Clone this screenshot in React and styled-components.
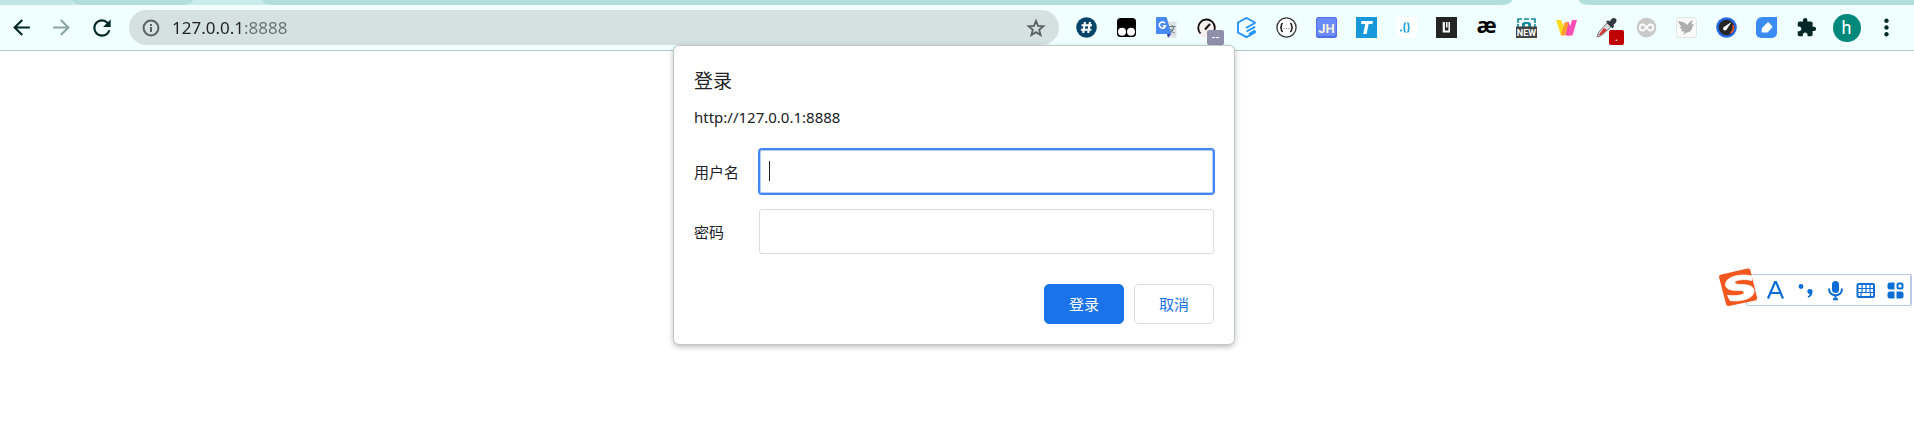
import React from "react";
import styled, { createGlobalStyle } from "styled-components";
import {
  MdArrowBack,
  MdArrowForward,
  MdExtension,
  MdMoreVert,
  MdRefresh
} from "react-icons/md";

const GlobalStyle = createGlobalStyle`
  * {
    box-sizing: border-box;
  }
  body {
    margin: 0;
    background: #ffffff;
    color: #202124;
    font-family: "Noto Sans", "Noto Sans CJK SC", sans-serif;
  }
  button,
  input {
    font-family: inherit;
  }
`;

const Browser = styled.div`
  position: relative;
  min-height: 100vh;
`;

const TabStrip = styled.div`
  display: flex;
  height: 5px;
  background: #f0ffff;
`;

const TabGroup = styled.div`
  display: flex;
  flex: 1;
  overflow: hidden;
  background: #caecea;
  border-bottom-right-radius: 10px 5px;
`;

const Tab = styled.div`
  ${props => (props.$width ? `width: ${props.$width}px` : `flex: 1`)};
  margin-right: ${props => (props.$spaced ? "69px" : "0")};
  background: ${props => (props.$hovered ? "#c0e6e3" : "#b2dfdb")};
  border-radius: ${props => (props.$hovered ? "0" : "0 0 10px 10px / 0 0 5px 5px")};
`;

const RestOfTabs = styled.div`
  width: 335px;
  margin-left: 67px;
  background: #b2dfdb;
  border-bottom-left-radius: 10px 5px;
`;

const Toolbar = styled.header`
  display: flex;
  align-items: center;
  height: 46px;
  padding: 0 17px 1px 11px;
  background: #f0ffff;
  box-shadow: inset 0 -1px 0 #b0cbc9;
`;

const IconRow = styled.div`
  display: flex;
  align-items: center;
  gap: 19px;
`;

const IconButton = styled.button`
  position: relative;
  display: flex;
  flex: none;
  align-items: center;
  justify-content: center;
  width: 21px;
  height: 21px;
  padding: 0;
  border: 0;
  background: none;
  color: ${props => (props.disabled ? "#8ba3a2" : "#012827")};

  svg {
    flex: none;
  }
`;

const Badge = styled.span`
  position: absolute;
  top: 13px;
  left: ${props => (props.$wide ? "11px" : "13px")};
  width: ${props => (props.$wide ? "17px" : "15px")};
  height: 15px;
  border-radius: 2px;
  background: ${props => (props.$wide ? "#8f8faa" : "#c00000")};
  color: #ffffff;
  font: 12px/15px "Liberation Sans", sans-serif;
  text-align: center;
`;

const Avatar = styled.span`
  flex: none;
  width: 28px;
  height: 28px;
  border-radius: 50%;
  background: #00897b;
  color: #ffffff;
  font: 18px/28px Roboto, sans-serif;
  text-align: center;
`;

const AddressBar = styled.div`
  display: flex;
  flex: 1;
  align-items: center;
  height: 35px;
  margin: 0 17px;
  padding: 0 12px;
  border-radius: 18px;
  background: #d5e1e1;
  color: #5a6162;
`;

const AddressInput = styled.input`
  flex: 1;
  min-width: 0;
  margin: 0 12px 0 11px;
  padding: 0;
  border: 0;
  outline: 0;
  background: linear-gradient(to right, #202124 73px, #687071 73px);
  -webkit-background-clip: text;
  background-clip: text;
  -webkit-text-fill-color: transparent;
  font-size: 17px;
  line-height: 24px;
`;

const DialogLayer = styled.div`
  position: absolute;
  top: 46px;
  left: 0;
  right: 6px;
  display: flex;
  justify-content: center;
`;

const Dialog = styled.form`
  width: 560px;
  padding: 20px;
  border-radius: 5px;
  background: #ffffff;
  box-shadow: 0 0 0 1px #c3c8c8, 0 2px 6px rgba(0, 0, 0, 0.35);
`;

const Title = styled.h1`
  margin: 0 0 11px;
  font-size: 19px;
  font-weight: 400;
  line-height: 30px;
`;

const Origin = styled.p`
  margin: 0 0 22px;
  font-size: 15px;
  line-height: 20px;
`;

const Fields = styled.div`
  display: grid;
  gap: 15px;
`;

const Field = styled.div`
  position: relative;
  display: grid;
  grid-template-columns: 65px 1fr;
  align-items: center;
`;

const Label = styled.label`
  font-size: 15px;
  line-height: 20px;
`;

const TextInput = styled.input`
  width: 100%;
  height: 45px;
  padding: 0 10px;
  border: 1px solid ${props => (props.$active ? "#4285f4" : "#dadce0")};
  border-radius: 3px;
  outline: 0;
  background: #ffffff;
  color: #202124;
  font-size: 15px;
  ${props =>
    props.$active &&
    `
    box-shadow: 0 0 0 1px #4285f4, inset 0 0 0 1px #b3cefb;
  `};
`;

const Caret = styled.span`
  position: absolute;
  top: 12px;
  left: 75px;
  width: 1px;
  height: 20px;
  background: #202124;
`;

const Actions = styled.div`
  display: flex;
  justify-content: flex-end;
  gap: 10px;
  margin-top: 30px;
`;

const Button = styled.button`
  width: 80px;
  height: 40px;
  padding: 0;
  border: 1px solid ${props => (props.$primary ? "#1a73e8" : "#dadce0")};
  border-radius: 5px;
  background: ${props => (props.$primary ? "#1a73e8" : "#ffffff")};
  color: ${props => (props.$primary ? "#ffffff" : "#1a73e8")};
  font-size: 15px;
  line-height: 20px;
`;

const ImeBar = styled.aside`
  position: absolute;
  top: 268px;
  right: 2px;
  display: flex;
  align-items: center;
`;

const ImeTools = styled.div`
  display: flex;
  align-items: center;
  gap: 9px;
  height: 32px;
  margin: 5px 0 0 -12px;
  padding: 0 4px 0 18px;
  border: 1px solid #b9cae2;
  border-right-width: 2px;
  border-radius: 2px;
  background: #ffffff;

  button {
    color: #0a6ed6;
  }
`;

const ImeLogo = styled.svg`
  position: relative;
  z-index: 1;
  flex: none;
`;

const Glyph = ({ children, size = 21 }) => (
  <svg width={size} height={size} viewBox="0 0 21 21" fill="none">
    {children}
  </svg>
);

const InfoIcon = () => (
  <svg width="20" height="20" viewBox="0 0 20 20" fill="none">
    <circle cx="10" cy="10" r="7.400" stroke="currentColor" strokeWidth="2" />
    <path d="M10 9v5M10 6v2" stroke="currentColor" strokeWidth="2" />
  </svg>
);

const StarIcon = () => (
  <svg width="22" height="22" viewBox="0 0 24 24" fill="none">
    <path
      d="M12 4.200l2.200 5.500 5.800.4-4.500 3.800 1.500 5.700-5-3.100-5 3.100 1.500-5.700L4 10.100l5.800-.4z"
      stroke="currentColor"
      strokeWidth="2"
    />
  </svg>
);

const extensions = [
  {
    name: "Hash",
    icon: (
      <Glyph>
        <circle cx="10.5" cy="10.5" r="10.3" fill="#05446b" />
        <path
          d="M9 5L7.2 16M14 5l-1.800 11M5.500 8.300h10.500M4.900 12.700h10.500"
          stroke="#fff"
          strokeWidth="2.100"
        />
      </Glyph>
    )
  },
  {
    name: "Tampermonkey",
    icon: (
      <Glyph>
        <rect x="1" y="1" width="19" height="19" rx="3.500" fill="#000" />
        <circle cx="6" cy="14.800" r="4" fill="#fff" />
        <circle cx="15" cy="14.800" r="4" fill="#fff" />
      </Glyph>
    )
  },
  {
    name: "Translate",
    icon: (
      <Glyph>
        <path d="M8 4.500h11.500a1 1 0 0 1 1 1v14a1 1 0 0 1-1 1H12z" fill="#dfe1e3" />
        <path d="M11 17h4l-3 4z" fill="#3440b8" />
        <path
          d="M13 9.500h6.500M16.200 8v1.500M18 10c-.7 2.800-2 4.500-4 6M14.500 12c1 1.800 2.300 3 4 4"
          stroke="#667f88"
          strokeWidth="1.200"
        />
        <path d="M1 0h9.500l5 17H1a1 1 0 0 1-1-1V1a1 1 0 0 1 1-1z" fill="#4a89f3" />
        <path
          d="M9 6.300A3.100 3.100 0 1 0 9.500 8.800H6.700"
          stroke="#fff"
          strokeWidth="1.600"
        />
      </Glyph>
    )
  },
  {
    name: "Speed",
    badge: "--",
    wide: true,
    icon: (
      <Glyph>
        <circle cx="10.500" cy="11" r="10" fill="#f7eeee" />
        <path d="M4.500 16.500A8.300 8.300 0 1 1 17 16" stroke="#111" strokeWidth="1.800" />
        <path d="M9 12.500L14 7" stroke="#111" strokeWidth="2" />
      </Glyph>
    )
  },
  {
    name: "Hexagon",
    icon: (
      <Glyph>
        <path
          d="M18.800 6.500V5.500L10.500 1 2 5.500v10l8.500 4.700 8.300-4.700v-2"
          stroke="#2492ff"
          strokeWidth="1.900"
        />
        <path
          d="M19 6L10 11M19 9.800L10.500 14.500M19 13.500L13 17"
          stroke="#2492ff"
          strokeWidth="1.900"
        />
      </Glyph>
    )
  },
  {
    name: "JSON",
    icon: (
      <Glyph>
        <circle cx="10.500" cy="10.500" r="9.600" fill="#fff" stroke="#333" strokeWidth="1.300" />
        <path
          d="M7 6.500c-1.600 0-1.600.5-1.600 2s0 2-1.400 2c1.400 0 1.400.5 1.400 2s0 2 1.600 2M14 6.500c1.600 0 1.600.5 1.600 2s0 2 1.400 2c-1.400 0-1.400.5-1.400 2s0 2-1.600 2"
          stroke="#222"
          strokeWidth="1.600"
        />
        <path d="M7.500 11.500h1M10 11.500h1M12.500 11.500h1" stroke="#777" />
      </Glyph>
    )
  },
  {
    name: "JSON Handle",
    icon: (
      <Glyph>
        <rect width="21" height="21" rx="2.500" fill="#5070ea" />
        <rect x="1" y="1" width="19" height="18" rx="2" fill="#6b8afa" />
        <text
          x="10.500"
          y="15.500"
          textAnchor="middle"
          fontFamily="Roboto"
          fontSize="13"
          fontWeight="700"
          fill="#f7f3dc"
        >
          JH
        </text>
      </Glyph>
    )
  },
  {
    name: "Typer",
    icon: (
      <Glyph>
        <rect width="21" height="21" fill="#1698db" />
        <path d="M5.500 4h11.500l-.6 3h-3.800L10.700 17H7.200L9.200 7H4.900z" fill="#fff" />
      </Glyph>
    )
  },
  {
    name: "Braces",
    icon: (
      <Glyph>
        <rect width="21" height="21" rx="2" fill="#fff" />
        <circle cx="5" cy="13.500" r="1.100" fill="#169fda" />
        <path
          d="M9.800 6c-1.300 0-1.300.5-1.300 2.300s0 2.200-1.200 2.200c1.200 0 1.200.5 1.200 2.200s0 2.300 1.300 2.300M11.200 6c1.300 0 1.300.5 1.300 2.300s0 2.200 1.200 2.200c-1.200 0-1.200.5-1.200 2.200s0 2.300-1.300 2.300"
          stroke="#169fda"
          strokeWidth="1.700"
        />
      </Glyph>
    )
  },
  {
    name: "Library",
    icon: (
      <Glyph>
        <rect width="21" height="21" fill="#242424" />
        <path d="M7.800 5v9.500H14" stroke="#fff" strokeWidth="2.200" />
        <path d="M10.800 5v5.500M13.200 5v9.500" stroke="#fff" strokeWidth="1.500" />
      </Glyph>
    )
  },
  {
    name: "Ash",
    icon: (
      <Glyph>
        <text
          x="10.500"
          y="16"
          textAnchor="middle"
          fontFamily="Open Sans"
          fontSize="22"
          fontWeight="700"
          fill="#000"
        >
          æ
        </text>
      </Glyph>
    )
  },
  {
    name: "Capture",
    icon: (
      <Glyph>
        <path
          d="M2 6V2h4M8 2h5M15 2h4v4M2 7v3M19 7v3"
          stroke="#138a9c"
          strokeWidth="1.600"
        />
        <path d="M6 10V6.500l2-1.500h5l2 1.500V10z" fill="#138a9c" />
        <circle cx="10.500" cy="8.500" r="1.800" fill="#f0ffff" />
        <rect y="9.500" width="21" height="11.500" fill="#444" />
        <text
          x="10.500"
          y="18.700"
          textAnchor="middle"
          fontFamily="Roboto"
          fontSize="9"
          fontWeight="700"
          fill="#fff"
        >
          NEW
        </text>
      </Glyph>
    )
  },
  {
    name: "Wappalyzer",
    icon: (
      <Glyph>
        <path d="M0 3h5l4.500 10-2.500 5.500H5z" fill="#ffd91c" />
        <path d="M8.500 6l4-1.500 3 9-1.500 5h-4z" fill="#fd4aa9" />
        <path d="M8.500 5.500h4L9.500 18.500H5z" fill="#ff9d2e" />
        <path d="M16 3h5l-4.500 15.500h-5z" fill="#fb4fb7" />
      </Glyph>
    )
  },
  {
    name: "Color picker",
    badge: ".",
    icon: (
      <Glyph>
        <path d="M11 6l4 4-9.500 8.500L1 20l1.500-4.500z" fill="#d8dadc" stroke="#777" />
        <path d="M8 11l3 2-6 5-2.500.5z" fill="#d92a2a" />
        <path
          d="M10 4.500l2-1 2 1c1-3 3.500-4.500 5.500-3s1 4.500-2 6l.5 2-1.500 2z"
          fill="#33363c"
        />
      </Glyph>
    )
  },
  {
    name: "Infinity",
    icon: (
      <Glyph>
        <circle cx="10.500" cy="10.500" r="9.800" fill="#c9c9c9" />
        <path
          d="M10.500 10.500c-1.500-2-2.300-3-3.700-3a3 3 0 0 0 0 6c1.400 0 2.200-1 3.700-3s2.300-3 3.700-3a3 3 0 0 1 0 6c-1.400 0-2.200-1-3.700-3z"
          stroke="#fff"
          strokeWidth="1.800"
        />
      </Glyph>
    )
  },
  {
    name: "Bird",
    icon: (
      <Glyph>
        <rect x=".5" y=".5" width="20" height="20" rx="2.500" fill="#fafafa" stroke="#e4e6e6" />
        <path
          d="M2 4c4 .8 7 1.500 9.500 4 1-2.500 3-4 6-5-1.500 1.500-2 3-1.700 4.500.8-.6 1.700-.4 2.700.5l-2 1c0 4-2.500 6.500-6 6.500L6.500 18.500c1-1.200 1.800-2.500 2-4-1.800.2-3-.3-3.800-1.300l2.300-.4C5 12 4 11 3.700 9.700l2.300.1C4 8.500 2.500 6.500 2 4z"
          fill="#adadad"
        />
      </Glyph>
    )
  },
  {
    name: "Gauge",
    icon: (
      <Glyph>
        <circle cx="10.500" cy="10.500" r="10.300" fill="#2467df" />
        <circle cx="10.500" cy="10.500" r="7.800" fill="#262626" />
        <path d="M17 8a7 7 0 0 1-2.500 8" stroke="#e9512e" strokeWidth="1.700" />
        <path d="M15.500 5l-4.700 7.200a1.900 1.900 0 1 1-2.600-2.400z" fill="#fff" />
      </Glyph>
    )
  },
  {
    name: "Tag",
    icon: (
      <Glyph>
        <path
          d="M6 0h15v16a5 5 0 0 1-5 5H5a5 5 0 0 1-5-5V6a6 6 0 0 1 6-6z"
          fill="#3b8cf2"
        />
        <path
          d="M11.500 5.500q.7-.6 1.300 0l3.400 3.800q.5.700 0 1.300L11.500 15.500H6.500q-1 0-.9-1L6 11z"
          fill="#fff"
        />
      </Glyph>
    )
  },
  { name: "Extensions", icon: <MdExtension size={21} /> },
  { name: "Profile", icon: <Avatar>h</Avatar> },
  { name: "Menu", icon: <MdMoreVert size={27} /> }
];

const imeTools = [
  {
    name: "English mode",
    icon: (
      <Glyph>
        <path d="M3 18.500L10 2h1l7 16.500M5.500 13h10" stroke="currentColor" strokeWidth="2.200" />
      </Glyph>
    )
  },
  {
    name: "Punctuation",
    icon: (
      <Glyph>
        <circle cx="6" cy="6.500" r="2.400" fill="currentColor" />
        <path
          d="M14.800 9a2.500 2.500 0 0 1 2.700 2.700c0 2.800-1.500 5-4.300 6l-.6-1.200c1.300-.7 2-1.500 2.200-2.500A2.500 2.500 0 0 1 14.800 9z"
          fill="currentColor"
        />
      </Glyph>
    )
  },
  {
    name: "Voice input",
    icon: (
      <Glyph>
        <rect x="7" y="1" width="7" height="12" rx="3.500" fill="currentColor" />
        <path
          d="M4 8.500c0 4.300 2.700 6.700 6.500 6.700s6.500-2.400 6.500-6.700M8 19.300h5"
          stroke="currentColor"
          strokeWidth="2"
        />
        <path d="M10.500 15v4" stroke="currentColor" strokeWidth="2" />
      </Glyph>
    )
  },
  {
    name: "Keyboard",
    icon: (
      <Glyph>
        <rect
          x="2.500"
          y="4"
          width="16.500"
          height="13"
          rx="1"
          stroke="currentColor"
          strokeWidth="2"
        />
        <path
          d="M3 8.500h16M3 12.500h16M7 4v8.500M11 4v8.500M15 4v8.500M6 12.500V17M15.500 12.500V17"
          stroke="currentColor"
          strokeWidth="1.200"
        />
      </Glyph>
    )
  },
  {
    name: "Toolbox",
    icon: (
      <Glyph>
        <path
          d="M5 2.500h4.500v7H5A2.500 2.500 0 0 1 2.500 7v-2A2.500 2.500 0 0 1 5 2.500zM5 11.500h4.500v7H5A2.500 2.500 0 0 1 2.500 16v-2A2.500 2.500 0 0 1 5 11.500zM11.500 11.500H16a2.500 2.500 0 0 1 2.500 2.500v2a2.500 2.500 0 0 1-2.500 2.500h-4.500z"
          fill="currentColor"
        />
        <rect
          x="12.500"
          y="3.500"
          width="5"
          height="5"
          rx="1.500"
          stroke="currentColor"
          strokeWidth="2"
        />
      </Glyph>
    )
  }
];

const App = () => (
  <Browser>
    <GlobalStyle />
    <TabStrip>
      <TabGroup>
        <Tab $width={72} $hovered />
        <Tab $width={121} $spaced />
        <Tab />
      </TabGroup>
      <RestOfTabs />
    </TabStrip>
    <Toolbar>
      <IconRow>
        <IconButton aria-label="Back">
          <MdArrowBack size={25} />
        </IconButton>
        <IconButton aria-label="Forward" disabled>
          <MdArrowForward size={25} />
        </IconButton>
        <IconButton aria-label="Reload">
          <MdRefresh size={26} />
        </IconButton>
      </IconRow>
      <AddressBar>
        <InfoIcon />
        <AddressInput aria-label="Address" defaultValue="127.0.0.1:8888" />
        <StarIcon />
      </AddressBar>
      <IconRow>
        {extensions.map(item => (
          <IconButton key={item.name} aria-label={item.name}>
            {item.icon}
            {item.badge && <Badge $wide={item.wide}>{item.badge}</Badge>}
          </IconButton>
        ))}
      </IconRow>
    </Toolbar>

    <DialogLayer>
      <Dialog onSubmit={event => event.preventDefault()}>
        <Title>登录</Title>
        <Origin>http://127.0.0.1:8888</Origin>
        <Fields>
          <Field>
            <Label htmlFor="username">用户名</Label>
            <TextInput id="username" type="text" $active />
            <Caret />
          </Field>
          <Field>
            <Label htmlFor="password">密码</Label>
            <TextInput id="password" type="password" />
          </Field>
        </Fields>
        <Actions>
          <Button type="submit" $primary>
            登录
          </Button>
          <Button type="button">取消</Button>
        </Actions>
      </Dialog>
    </DialogLayer>

    <ImeBar>
      <ImeLogo width="40" height="39" viewBox="0 0 39 39">
        <path
          d="M3 6.500L29 .6q2.500-.5 3 2l6.500 27q.5 2.500-2 3L10.500 38q-2.500.5-3-2L.6 9.500q-.5-2.400 2.400-3z"
          fill="#f4571d"
        />
        <path
          d="M33.500 8C23 5.500 8 8 7 16c-.6 6.500 9 6.500 15 6.500 4.500 0 5 3.500 0 4.500-4 .8-8.500 1-13 .3l2.500 5.200C20 34 35 31.500 35.500 23.500c.4-6-7-7-14-7-6.500 0-7-3.500-1-4.500 4-.7 9-.6 13 .5z"
          fill="#fff"
          stroke="#fff"
          strokeWidth="0.800"
        />
      </ImeLogo>
      <ImeTools>
        {imeTools.map(tool => (
          <IconButton key={tool.name} aria-label={tool.name}>
            {tool.icon}
          </IconButton>
        ))}
      </ImeTools>
    </ImeBar>
  </Browser>
);

export default App;
